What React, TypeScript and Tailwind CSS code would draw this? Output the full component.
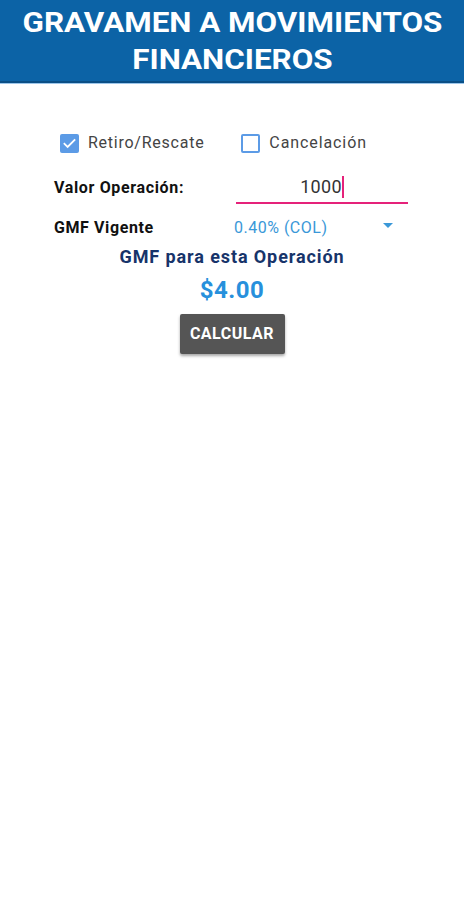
import React from "react";

export default function App() {
  return (
    <div className="w-[464px] h-[900px] bg-white" style={{ fontFamily: "Roboto, 'Noto Sans', sans-serif" }}>
      <div className="h-[83px] bg-[#0c63a6] border-b-[2px] border-[#0a4f86] flex flex-col items-center justify-center shadow-[0_1px_0_#9cc6ea]">
        <div className="text-white font-bold text-[28px] leading-[37px] text-center scale-x-[1.12]">GRAVAMEN A MOVIMIENTOS</div>
        <div className="text-white font-bold text-[28px] leading-[37px] text-center scale-x-[1.12]">FINANCIEROS</div>
      </div>

      <div className="flex items-center pt-[48px] pl-[60px]">
        <div className="flex items-center">
          <div className="w-[19px] h-[19px] rounded-[2px] bg-[#5c9be6] flex items-center justify-center">
            <svg width="15" height="15" viewBox="0 0 24 24" fill="none" stroke="white" strokeWidth="3" strokeLinecap="square">
              <path d="M4 12.5l5 5L20 6.5" />
            </svg>
          </div>
          <span className="ml-[9px] text-[16px] text-[#444] tracking-[0.75px]">Retiro/Rescate</span>
        </div>
        <div className="flex items-center ml-[37px]">
          <div className="w-[19px] h-[19px] rounded-[2px] border-2 border-[#5c9be6] bg-white" />
          <span className="ml-[9px] text-[16px] text-[#444] tracking-[0.9px]">Cancelación</span>
        </div>
      </div>

      <div className="flex items-end mt-[17px] pl-[54px]">
        <span className="w-[182px] text-[16px] font-bold text-[#111] tracking-[0.65px] mb-[4px]">Valor Operación:</span>
        <div className="w-[172px] h-[32px] border-b-2 border-[#e5227a] flex items-center justify-center">
          <span className="text-[18px] text-[#333] leading-none tracking-[0.3px]">1000</span>
          <span className="inline-block w-[2px] h-[22px] bg-[#e5227a]" />
        </div>
      </div>

      <div className="flex items-center mt-[12px] pl-[54px] h-[24px]">
        <span className="text-[16px] font-bold text-[#111] tracking-[0.6px] w-[180px]">GMF Vigente</span>
        <span className="text-[16px] text-[#3a98d8] tracking-[0.5px] w-[149px]">0.40% (COL)</span>
        <svg width="10" height="5" viewBox="0 0 10 5" className="mt-[-6px]">
          <path d="M0 0h10L5 5z" fill="#3a98d8" />
        </svg>
      </div>

      <div className="text-center text-[18px] font-bold text-[#17346a] tracking-[0.9px] mt-[3px]">GMF para esta Operación</div>
      <div className="text-center text-[24px] font-bold text-[#2790dc] tracking-[0.5px] mt-[5px] leading-[30px]">$4.00</div>
      <div className="flex justify-center mt-[9px]">
        <div className="w-[105px] h-[40px] bg-[#555555] rounded-[2px] shadow-[0_2px_3px_rgba(0,0,0,0.35)] flex items-center justify-center text-white font-bold text-[16px] tracking-[0.5px]">
          CALCULAR
        </div>
      </div>
    </div>
  );
}
